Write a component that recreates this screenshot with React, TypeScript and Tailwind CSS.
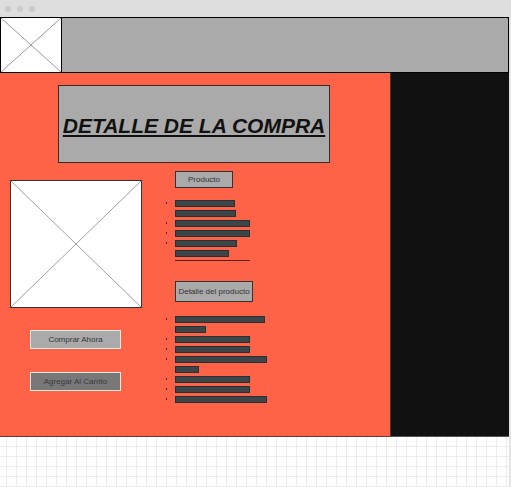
import React from "react";

const list1 = [
  { w: 60, b: true },
  { w: 61, b: false },
  { w: 75, b: true },
  { w: 75, b: true },
  { w: 62, b: true },
  { w: 54, b: false },
];

const list2 = [
  { w: 90, b: true },
  { w: 31, b: false },
  { w: 75, b: true },
  { w: 75, b: true },
  { w: 92, b: true },
  { w: 24, b: false },
  { w: 75, b: true },
  { w: 75, b: true },
  { w: 92, b: true },
];

function Cross({ color }: { color: string }) {
  return (
    <svg className="absolute inset-0 h-full w-full" preserveAspectRatio="none" viewBox="0 0 100 100">
      <line x1="0" y1="0" x2="100" y2="100" stroke={color} strokeWidth="1" vectorEffect="non-scaling-stroke" />
      <line x1="100" y1="0" x2="0" y2="100" stroke={color} strokeWidth="1" vectorEffect="non-scaling-stroke" />
    </svg>
  );
}

function Rows({ items }: { items: { w: number; b: boolean }[] }) {
  return (
    <div className="flex flex-col">
      {items.map((it, i) => (
        <div key={i} className="flex h-[10px] items-start">
          <div className="relative w-[9px] h-[7px]">
            {it.b && <div className="absolute left-0 top-[2px] h-[2px] w-[1px] bg-[#5a1e12]" />}
          </div>
          <div className="h-[7px] border border-[#2a2f31] bg-[#3d4548]" style={{ width: it.w }} />
        </div>
      ))}
    </div>
  );
}

export default function App() {
  return (
    <div className="w-[511px] h-[487px] overflow-hidden bg-white font-['Liberation_Sans',Arial,sans-serif] flex flex-col">
      {/* chrome */}
      <div className="h-[17px] bg-[#dedede] flex items-center gap-[6px] pl-[5px] shrink-0">
        <div className="w-[6px] h-[6px] rounded-full bg-[#cacaca]" />
        <div className="w-[6px] h-[6px] rounded-full bg-[#cacaca]" />
        <div className="w-[6px] h-[6px] rounded-full bg-[#cacaca]" />
      </div>
      <div className="flex flex-1">
        <div className="w-[509px] flex flex-col">
          {/* header */}
          <div className="h-[56px] flex shrink-0">
            <div className="relative w-[62px] h-full bg-white border border-black">
              <Cross color="#9a9a9a" />
            </div>
            <div className="flex-1 h-full bg-[#aaaaaa] border border-l-0 border-black" />
          </div>
          {/* main */}
          <div className="h-[364px] flex shrink-0">
            <div className="w-[390px] bg-[#ff6347] flex flex-col pt-[12px] border-b border-[#6b3a30]">
              <div className="ml-[58px] w-[272px] h-[78px] pt-[2px] bg-[#aaaaaa] border border-[#3a2a26] flex items-center justify-center">
                <span className="text-[21px] font-bold italic underline text-[#111] leading-none">DETALLE DE LA COMPRA</span>
              </div>
              <div className="flex mt-[8px]">
                <div className="ml-[10px] w-[132px] flex flex-col pt-[9px]">
                  <div className="relative w-[132px] h-[128px] bg-white border border-[#333]">
                    <Cross color="#a0a0a0" />
                  </div>
                  <div className="ml-[20px] mt-[22px] w-[91px] h-[19px] bg-[#aaaaaa] border border-[#f2eee6] flex items-center justify-center text-[8px] text-[#333]">
                    Comprar Ahora
                  </div>
                  <div className="ml-[20px] mt-[23px] w-[91px] h-[19px] bg-[#787878] border border-[#f2eee6] flex items-center justify-center text-[8px] text-[#3a3a3a]">
                    Agregar Al Carrito
                  </div>
                </div>
                <div className="ml-[24px] flex flex-col">
                  <div className="ml-[9px] w-[58px] h-[17px] bg-[#aaaaaa] border border-[#333] flex items-center justify-center text-[8px] text-[#333]">
                    Producto
                  </div>
                  <div className="mt-[12px]">
                    <Rows items={list1} />
                  </div>
                  <div className="ml-[9px] w-[75px] h-[1px] bg-[#5a1e12]" />
                  <div className="ml-[9px] mt-[20px] w-[78px] h-[21px] bg-[#aaaaaa] border border-[#333] flex items-center justify-center text-[8px] text-[#333]">
                    Detalle del producto
                  </div>
                  <div className="mt-[14px]">
                    <Rows items={list2} />
                  </div>
                </div>
              </div>
            </div>
            <div className="flex-1 bg-[#111111] border-l border-[#3a3a3a] border-b border-b-[#555]" />
          </div>
          {/* grid */}
          <div className="flex-1 bg-white bg-[linear-gradient(to_right,#ececec_1px,transparent_1px),linear-gradient(to_bottom,#ececec_1px,transparent_1px)] bg-[size:10px_10px] bg-[position:6px_9px]" />
        </div>
        <div className="w-[2px] bg-[#e4e4e4]" />
      </div>
    </div>
  );
}
